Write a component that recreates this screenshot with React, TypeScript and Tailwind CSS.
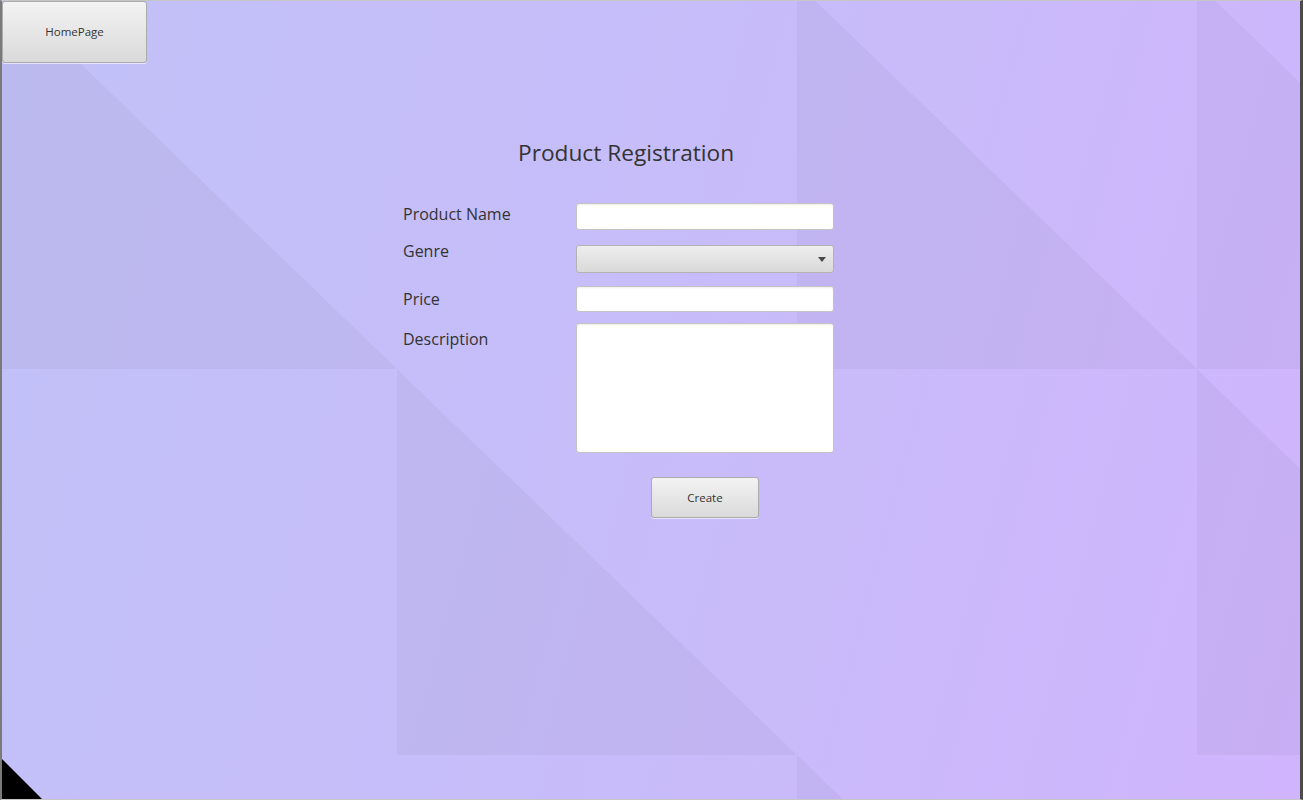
import React from "react";

const FONT = { fontFamily: '"Open Sans", "Noto Sans", sans-serif' };

// which background tiles get the darker lower-left triangle
const TILES = [
  [true, false, true, true],
  [false, true, false, true],
  [false, false, true, false],
];

function Backdrop() {
  return (
    <div className="pointer-events-none absolute inset-0 overflow-hidden">
      <div className="-ml-[5px] -mt-[18px] grid grid-cols-[repeat(4,400px)] grid-rows-[repeat(3,386px)]">
        {TILES.flatMap((row, r) =>
          row.map((dark, c) => (
            <div key={`${r}-${c}`} className="h-[386px] w-[400px]">
              {dark && (
                <svg viewBox="0 0 400 386" preserveAspectRatio="none" className="h-full w-full">
                  <polygon points="0,0 0,386 400,386" fill="#000" fillOpacity="0.035" />
                </svg>
              )}
            </div>
          ))
        )}
      </div>
    </div>
  );
}

function FxButton({ children, className }: { children: React.ReactNode; className?: string }) {
  return (
    <button
      type="button"
      className={`rounded-[3px] border border-[#ababab] bg-gradient-to-b from-[#f3f3f3] to-[#dadada] text-[11.5px] text-[#333] shadow-[0_1px_0_rgba(255,255,255,0.6)] ${className ?? ""}`}
      style={FONT}
    >
      {children}
    </button>
  );
}

function TextField({ h }: { h: string }) {
  return (
    <div
      className={`w-[258px] ${h} rounded-[3px] border border-[#c4c4c4] bg-white shadow-[inset_0_1px_2px_rgba(0,0,0,0.07)]`}
    />
  );
}

export default function App() {
  return (
    <div
      className="relative h-[800px] w-[1303px] overflow-hidden border-t border-b border-l-2 border-r-[3px] border-t-[#c6c6c6] border-b-[#c6c6c6] border-l-[#7a7a7a] border-r-[#4c4c4c] bg-[linear-gradient(105deg,#c2c1f8_0%,#c6bdf9_45%,#d0b5fd_100%)]"
      style={FONT}
    >
      <Backdrop />

      <div className="relative">
        <FxButton className="h-[62px] w-[145px]">HomePage</FxButton>

        <div className="flex flex-col pl-[401px] text-[#333]">
          <h1 className="ml-[115px] mt-[74px] text-[22.7px] leading-[32px]">Product Registration</h1>

          <div className="mt-[34px] flex items-start">
            <span className="mt-0 w-[173px] text-[16px] leading-[22px]">Product Name</span>
            <TextField h="h-[27px]" />
          </div>

          <div className="mt-[15px] flex items-start">
            <span className="-mt-[5px] w-[173px] text-[16px] leading-[22px]">Genre</span>
            <div className="relative flex h-[28px] w-[258px] items-center justify-end rounded-[3px] border border-[#b3b3b3] bg-gradient-to-b from-[#eeeeee] to-[#d9d9d9] pr-[7px]">
              <svg width="8" height="5" viewBox="0 0 8 5">
                <polygon points="0,0 8,0 4,5" fill="#4a4a4a" />
              </svg>
            </div>
          </div>

          <div className="mt-[13px] flex items-start">
            <span className="mt-[2px] w-[173px] text-[16px] leading-[22px]">Price</span>
            <TextField h="h-[26px]" />
          </div>

          <div className="mt-[11px] flex items-start">
            <span className="mt-[5px] w-[173px] text-[16px] leading-[22px]">Description</span>
            <TextField h="h-[130px]" />
          </div>

          <div className="mt-[24px] pl-[248px]">
            <FxButton className="h-[41px] w-[108px]">Create</FxButton>
          </div>
        </div>
      </div>

      <svg className="absolute bottom-0 left-0" width="40" height="40" viewBox="0 0 40 40">
        <polygon points="0,0 0,40 40,40" fill="#000" />
      </svg>
    </div>
  );
}
